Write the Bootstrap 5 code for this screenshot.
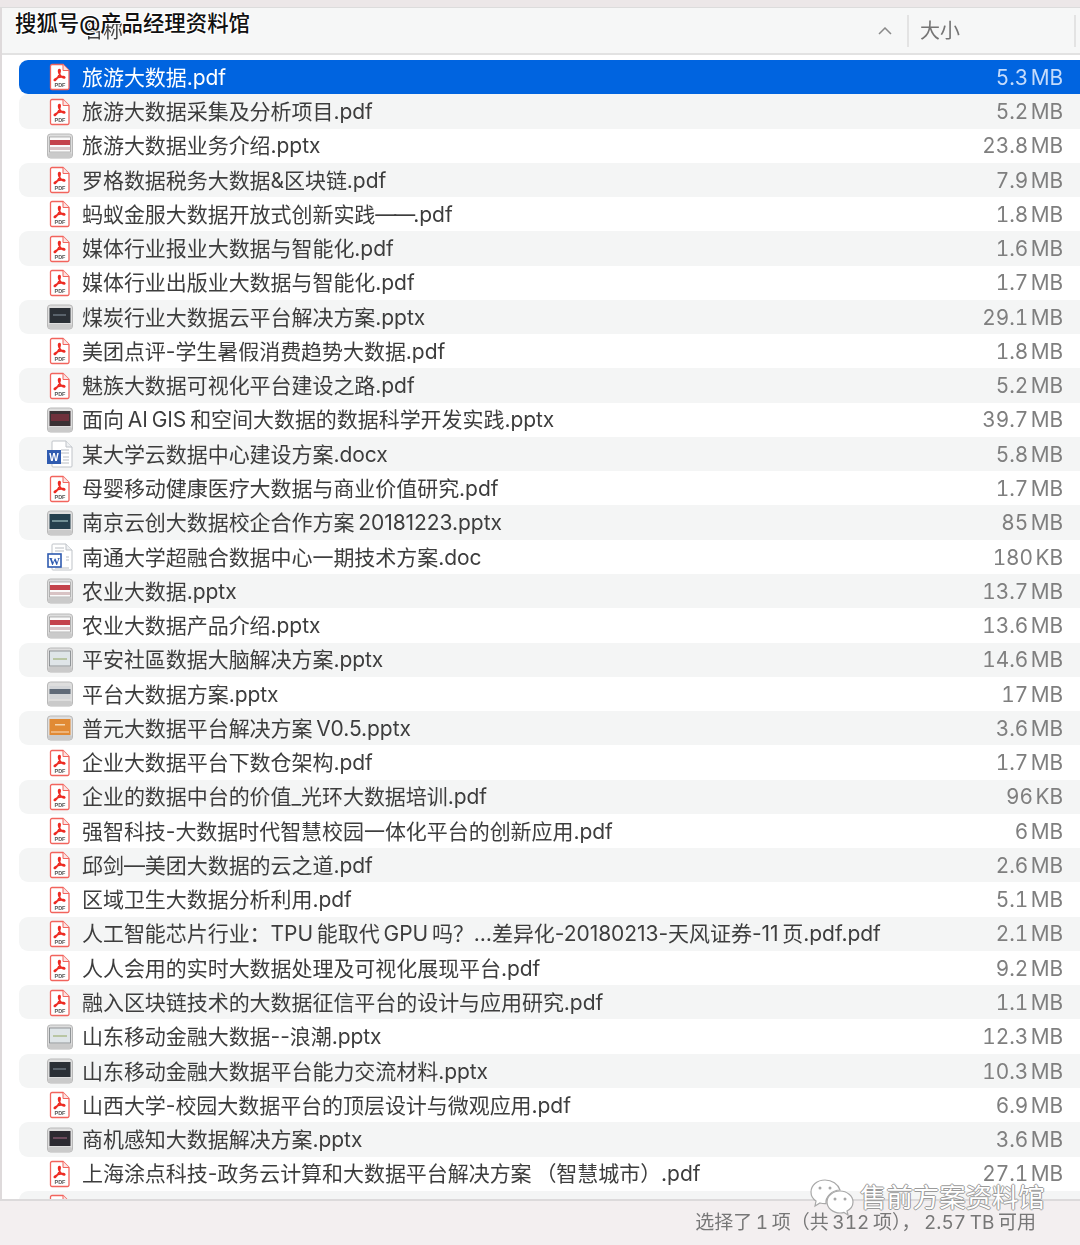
<!DOCTYPE html>
<html lang="zh-CN">
<head>
    <meta charset="UTF-8">
    <title>文件列表</title>
    <link href="https://cdn.jsdelivr.net/npm/bootstrap@5.3.0/dist/css/bootstrap.min.css" rel="stylesheet">
    <style>
        html, body {
            height: 100%;
        }
        body {
            width: 1080px;
            height: 1245px;
            overflow: hidden;
            position: relative;
            background: #fff;
            font-family: "Inter", "Noto Sans CJK SC", sans-serif;
            color: #3d3d3d;
        }
        .top-strip {
            height: 8px;
            background: #ece7e8;
            border-bottom: 1px solid #dcdcdc;
        }
        .finder-body {
            height: 1191px;
            border-left: 2px solid #dedadb;
            background: #fff;
            filter: blur(.35px);
        }
        .col-header {
            height: 47px;
            background: #f6f7f7;
            border-bottom: 2px solid #e2e2e2;
            font-size: 20px;
            color: #444;
        }
        .col-name {
            padding-left: 81px;
        }
        .sort-arrow {
            width: 14px;
            height: 8px;
            margin-right: 15px;
        }
        .col-sep {
            width: 2px;
            height: 32px;
            background: #e3e3e3;
        }
        .col-size {
            width: 165px;
            padding-left: 11px;
            color: #757575;
        }
        .file-list {
            padding: 5px 0 0 17px;
            overflow: hidden;
            height: 1144px;
        }
        .file-row {
            height: 34.28px;
            padding: .4px 17px 0 28px;
            font-size: 21px;
            line-height: 33px;
            letter-spacing: -.05px;
            word-spacing: -2px;
            border-radius: 9px 0 0 9px;
        }
        .file-row:nth-child(even) {
            background: #f4f5f5;
        }
        .file-row.picked {
            background: #0064e0;
            color: #fff;
        }
        .file-icon {
            width: 26px;
            height: 28px;
            flex: none;
            margin-right: 9px;
        }
        .file-size {
            color: #7f7f7f;
            font-size: 20.8px;
            word-spacing: -3px;
            font-variant-numeric: tabular-nums;
        }
        .picked .file-size {
            color: #c4dbfb;
        }
        .dash-tight {
            letter-spacing: -2px;
        }
        .status-bar {
            height: 46px;
            background: #f3eff0;
            border-top: 2px solid #dcdadb;
            color: #777;
            font-size: 19px;
            padding-right: 44px;
            word-spacing: -1.5px;
            font-variant-numeric: tabular-nums;
            filter: blur(.35px);
        }
        .mark-sohu {
            position: absolute;
            left: 15px;
            top: 8px;
            font-size: 21.4px;
            font-weight: 500;
            line-height: 30px;
            color: #111;
            text-shadow: 1px 1px 0 #fff, -1px -1px 0 #fff, 1px -1px 0 #fff, -1px 1px 0 #fff;
        }
        .mark-wechat {
            position: absolute;
            left: 810px;
            top: 1177px;
            font-size: 26.4px;
            line-height: 40px;
            color: #fff;
            text-shadow: 1px 0 0 #9a9a9a, -1px 0 0 #9a9a9a, 0 1px 0 #9a9a9a, 0 -1px 0 #9a9a9a;
        }
        .mark-wechat svg {
            width: 44px;
            height: 38px;
            margin-right: 6px;
        }
    </style>
</head>
<body>

<!-- icon sheet -->
<svg width="0" height="0" class="position-absolute">
    <symbol id="pdf" viewBox="0 0 26 28">
        <path d="M5 1.500h11l6 6V25a1.500 1.500 0 0 1-1.500 1.500H5A1.500 1.500 0 0 1 3.500 25V3A1.500 1.500 0 0 1 5 1.500z" fill="#fff" stroke="#f2645d" stroke-width="1.300"/>
        <path d="M16 1.500V7.500h6" fill="#fbe3e2" stroke="#f2645d" stroke-width="1"/>
        <path d="M12.500 6.500c1 0 .7 2.800-.7 6-1 2.200-2.500 4.200-3.700 4.900-.8.400-1-.4-.4-1 1.600-1.400 5.700-2.900 8.800-2.700 1.600.1 1.600 1.200.4 1.100-2.400-.3-4.800-3.200-5.200-6-.2-1.200 0-2.300.8-2.300z" fill="none" stroke="#ee2a22" stroke-width="1.700"/>
        <text x="13" y="24" font-size="5.500" font-weight="700" text-anchor="middle" fill="#555" font-family="Liberation Sans, sans-serif">PDF</text>
    </symbol>
    <symbol id="ppt-frame" viewBox="0 0 26 28">
        <rect x=".5" y="2" width="25" height="24" rx="3" fill="#dedede" stroke="#b8b8b8"/>
        <rect x="1" y="21" width="24" height="4.500" rx="2" fill="#cacaca"/>
    </symbol>
    <symbol id="ppt-red" viewBox="0 0 26 28">
        <use href="#ppt-frame"/>
        <rect x="2.500" y="5" width="21" height="15" fill="#fafafa" stroke="#8d8d8d" stroke-width=".6"/>
        <rect x="3" y="8" width="20" height="5" fill="#c4434b"/>
        <rect x="3" y="15" width="20" height="3" fill="#d8c3c4"/>
    </symbol>
    <symbol id="ppt-dark" viewBox="0 0 26 28">
        <use href="#ppt-frame"/>
        <rect x="2.500" y="5" width="21" height="15" fill="#2b3036"/>
        <rect x="6" y="11" width="13" height="2" fill="#59626b"/>
    </symbol>
    <symbol id="ppt-plum" viewBox="0 0 26 28">
        <use href="#ppt-frame"/>
        <rect x="2.500" y="5" width="21" height="15" fill="#2c2a31"/>
        <rect x="6" y="11" width="14" height="2" fill="#6b4a5c"/>
    </symbol>
    <symbol id="ppt-maroon" viewBox="0 0 26 28">
        <use href="#ppt-frame"/>
        <rect x="2.500" y="5" width="21" height="15" fill="#3a3134"/>
        <rect x="4" y="8" width="18" height="7" fill="#70313c"/>
    </symbol>
    <symbol id="ppt-teal" viewBox="0 0 26 28">
        <use href="#ppt-frame"/>
        <rect x="2.500" y="5" width="21" height="15" fill="#24404e"/>
        <rect x="5" y="11" width="16" height="2" fill="#6f8f95"/>
    </symbol>
    <symbol id="ppt-light" viewBox="0 0 26 28">
        <use href="#ppt-frame"/>
        <rect x="2.500" y="5" width="21" height="15" fill="#dfe5e8" stroke="#7e8286" stroke-width=".8"/>
        <rect x="6" y="12" width="14" height="2" fill="#b9c6a4"/>
    </symbol>
    <symbol id="ppt-band" viewBox="0 0 26 28">
        <use href="#ppt-frame"/>
        <rect x="2.500" y="6" width="21" height="13" fill="#d3d5d8"/>
        <rect x="2.500" y="9" width="21" height="5" fill="#5f6a78"/>
    </symbol>
    <symbol id="ppt-orange" viewBox="0 0 26 28">
        <use href="#ppt-frame"/>
        <rect x="2.500" y="5" width="21" height="16" fill="#e18a34"/>
        <rect x="8" y="10" width="10" height="1.500" fill="#f5d5ae"/>
        <rect x="4" y="17" width="18" height="2" fill="#eeb47a"/>
    </symbol>
    <symbol id="word" viewBox="0 0 26 28">
        <path d="M6 1h13l6 6v19a1 1 0 0 1-1 1H6a1 1 0 0 1-1-1V2a1 1 0 0 1 1-1z" fill="#fff" stroke="#bfc3c8"/>
        <path d="M19 1v6h6" fill="#eef0f2" stroke="#bfc3c8"/>
        <path d="M14 10h8M14 13h8M16 17h6M16 20h6M9 23h13" stroke="#b9bdc2"/>
        <rect x="0" y="10" width="14" height="14" fill="#2f5bb0"/>
        <text x="7" y="21" font-size="10" font-weight="700" text-anchor="middle" fill="#fff" font-family="Liberation Sans, sans-serif">W</text>
    </symbol>
    <symbol id="word-old" viewBox="0 0 26 28">
        <path d="M6 1h13l6 6v19a1 1 0 0 1-1 1H6a1 1 0 0 1-1-1V2a1 1 0 0 1 1-1z" fill="#fff" stroke="#bfc3c8"/>
        <path d="M19 1v6h6" fill="#eef0f2" stroke="#bfc3c8"/>
        <path d="M8 5h9M8 8h9M19 14h3M19 17h3M8 25h14" stroke="#b9bdc2"/>
        <rect x="1" y="11" width="13" height="13" fill="#fff" stroke="#2f5bb0" stroke-width="1.600"/>
        <text x="7.500" y="21.500" font-size="11" font-weight="700" text-anchor="middle" fill="#2f5bb0" font-family="Liberation Serif, serif">W</text>
    </symbol>
</svg>

<div class="top-strip"></div>

<div class="finder-body">
    <div class="col-header d-flex align-items-center">
        <div class="col-name flex-grow-1">名称</div>
        <svg class="sort-arrow" viewBox="0 0 14 8"><path d="M1 7l6-6 6 6" fill="none" stroke="#8a8a8a" stroke-width="1.500"/></svg>
        <div class="col-sep"></div>
        <div class="col-size">大小</div>
        <div class="col-sep"></div>
        <div style="width:4px"></div>
    </div>

    <div class="file-list">
        <div class="file-row picked d-flex align-items-center"><svg class="file-icon"><use href="#pdf"/></svg><span class="flex-grow-1">旅游大数据.pdf</span><span class="file-size">5.3 MB</span></div>
        <div class="file-row d-flex align-items-center"><svg class="file-icon"><use href="#pdf"/></svg><span class="flex-grow-1">旅游大数据采集及分析项目.pdf</span><span class="file-size">5.2 MB</span></div>
        <div class="file-row d-flex align-items-center"><svg class="file-icon"><use href="#ppt-red"/></svg><span class="flex-grow-1">旅游大数据业务介绍.pptx</span><span class="file-size">23.8 MB</span></div>
        <div class="file-row d-flex align-items-center"><svg class="file-icon"><use href="#pdf"/></svg><span class="flex-grow-1">罗格数据税务大数据&amp;区块链.pdf</span><span class="file-size">7.9 MB</span></div>
        <div class="file-row d-flex align-items-center"><svg class="file-icon"><use href="#pdf"/></svg><span class="flex-grow-1">蚂蚁金服大数据开放式创新实践<span class="dash-tight">——</span>.pdf</span><span class="file-size">1.8 MB</span></div>
        <div class="file-row d-flex align-items-center"><svg class="file-icon"><use href="#pdf"/></svg><span class="flex-grow-1">媒体行业报业大数据与智能化.pdf</span><span class="file-size">1.6 MB</span></div>
        <div class="file-row d-flex align-items-center"><svg class="file-icon"><use href="#pdf"/></svg><span class="flex-grow-1">媒体行业出版业大数据与智能化.pdf</span><span class="file-size">1.7 MB</span></div>
        <div class="file-row d-flex align-items-center"><svg class="file-icon"><use href="#ppt-dark"/></svg><span class="flex-grow-1">煤炭行业大数据云平台解决方案.pptx</span><span class="file-size">29.1 MB</span></div>
        <div class="file-row d-flex align-items-center"><svg class="file-icon"><use href="#pdf"/></svg><span class="flex-grow-1">美团点评-学生暑假消费趋势大数据.pdf</span><span class="file-size">1.8 MB</span></div>
        <div class="file-row d-flex align-items-center"><svg class="file-icon"><use href="#pdf"/></svg><span class="flex-grow-1">魅族大数据可视化平台建设之路.pdf</span><span class="file-size">5.2 MB</span></div>
        <div class="file-row d-flex align-items-center"><svg class="file-icon"><use href="#ppt-maroon"/></svg><span class="flex-grow-1">面向 AI GIS 和空间大数据的数据科学开发实践.pptx</span><span class="file-size">39.7 MB</span></div>
        <div class="file-row d-flex align-items-center"><svg class="file-icon"><use href="#word"/></svg><span class="flex-grow-1">某大学云数据中心建设方案.docx</span><span class="file-size">5.8 MB</span></div>
        <div class="file-row d-flex align-items-center"><svg class="file-icon"><use href="#pdf"/></svg><span class="flex-grow-1">母婴移动健康医疗大数据与商业价值研究.pdf</span><span class="file-size">1.7 MB</span></div>
        <div class="file-row d-flex align-items-center"><svg class="file-icon"><use href="#ppt-teal"/></svg><span class="flex-grow-1">南京云创大数据校企合作方案 20181223.pptx</span><span class="file-size">85 MB</span></div>
        <div class="file-row d-flex align-items-center"><svg class="file-icon"><use href="#word-old"/></svg><span class="flex-grow-1">南通大学超融合数据中心一期技术方案.doc</span><span class="file-size">180 KB</span></div>
        <div class="file-row d-flex align-items-center"><svg class="file-icon"><use href="#ppt-red"/></svg><span class="flex-grow-1">农业大数据.pptx</span><span class="file-size">13.7 MB</span></div>
        <div class="file-row d-flex align-items-center"><svg class="file-icon"><use href="#ppt-red"/></svg><span class="flex-grow-1">农业大数据产品介绍.pptx</span><span class="file-size">13.6 MB</span></div>
        <div class="file-row d-flex align-items-center"><svg class="file-icon"><use href="#ppt-light"/></svg><span class="flex-grow-1">平安社區数据大脑解决方案.pptx</span><span class="file-size">14.6 MB</span></div>
        <div class="file-row d-flex align-items-center"><svg class="file-icon"><use href="#ppt-band"/></svg><span class="flex-grow-1">平台大数据方案.pptx</span><span class="file-size">17 MB</span></div>
        <div class="file-row d-flex align-items-center"><svg class="file-icon"><use href="#ppt-orange"/></svg><span class="flex-grow-1">普元大数据平台解决方案 V0.5.pptx</span><span class="file-size">3.6 MB</span></div>
        <div class="file-row d-flex align-items-center"><svg class="file-icon"><use href="#pdf"/></svg><span class="flex-grow-1">企业大数据平台下数仓架构.pdf</span><span class="file-size">1.7 MB</span></div>
        <div class="file-row d-flex align-items-center"><svg class="file-icon"><use href="#pdf"/></svg><span class="flex-grow-1">企业的数据中台的价值_光环大数据培训.pdf</span><span class="file-size">96 KB</span></div>
        <div class="file-row d-flex align-items-center"><svg class="file-icon"><use href="#pdf"/></svg><span class="flex-grow-1">强智科技-大数据时代智慧校园一体化平台的创新应用.pdf</span><span class="file-size">6 MB</span></div>
        <div class="file-row d-flex align-items-center"><svg class="file-icon"><use href="#pdf"/></svg><span class="flex-grow-1">邱剑—美团大数据的云之道.pdf</span><span class="file-size">2.6 MB</span></div>
        <div class="file-row d-flex align-items-center"><svg class="file-icon"><use href="#pdf"/></svg><span class="flex-grow-1">区域卫生大数据分析利用.pdf</span><span class="file-size">5.1 MB</span></div>
        <div class="file-row d-flex align-items-center"><svg class="file-icon"><use href="#pdf"/></svg><span class="flex-grow-1">人工智能芯片行业：TPU 能取代 GPU 吗？…差异化-20180213-天风证券-11 页.pdf.pdf</span><span class="file-size">2.1 MB</span></div>
        <div class="file-row d-flex align-items-center"><svg class="file-icon"><use href="#pdf"/></svg><span class="flex-grow-1">人人会用的实时大数据处理及可视化展现平台.pdf</span><span class="file-size">9.2 MB</span></div>
        <div class="file-row d-flex align-items-center"><svg class="file-icon"><use href="#pdf"/></svg><span class="flex-grow-1">融入区块链技术的大数据征信平台的设计与应用研究.pdf</span><span class="file-size">1.1 MB</span></div>
        <div class="file-row d-flex align-items-center"><svg class="file-icon"><use href="#ppt-light"/></svg><span class="flex-grow-1">山东移动金融大数据--浪潮.pptx</span><span class="file-size">12.3 MB</span></div>
        <div class="file-row d-flex align-items-center"><svg class="file-icon"><use href="#ppt-dark"/></svg><span class="flex-grow-1">山东移动金融大数据平台能力交流材料.pptx</span><span class="file-size">10.3 MB</span></div>
        <div class="file-row d-flex align-items-center"><svg class="file-icon"><use href="#pdf"/></svg><span class="flex-grow-1">山西大学-校园大数据平台的顶层设计与微观应用.pdf</span><span class="file-size">6.9 MB</span></div>
        <div class="file-row d-flex align-items-center"><svg class="file-icon"><use href="#ppt-plum"/></svg><span class="flex-grow-1">商机感知大数据解决方案.pptx</span><span class="file-size">3.6 MB</span></div>
        <div class="file-row d-flex align-items-center"><svg class="file-icon"><use href="#pdf"/></svg><span class="flex-grow-1">上海涂点科技-政务云计算和大数据平台解决方案 （智慧城市）.pdf</span><span class="file-size">27.1 MB</span></div>
        <div class="file-row d-flex align-items-center"><svg class="file-icon"><use href="#pdf"/></svg></div>
    </div>
</div>

<div class="status-bar d-flex align-items-center justify-content-end">选择了 1 项（共 312 项）， 2.57 TB 可用</div>

<!-- watermarks on top of the shot -->
<div class="mark-sohu">搜狐号@产品经理资料馆</div>
<div class="mark-wechat d-flex align-items-center">
    <svg viewBox="0 0 44 38">
        <path d="M15 2C7 2 1 7.500 1 14c0 4 2 7 5 9l-1 5 5-3c2 .6 4 .8 6 .7C15 19 22 12 30 12 28 6 22 2 15 2z" fill="#fff" stroke="#a8a8a8" stroke-width="1.200"/>
        <path d="M30 13c-7 0-13 5-13 11s6 11 13 11c1.500 0 3-.2 4-.6l4 2.600-1-4c4-2 6-5.500 6-9 0-6-6-11-13-11z" fill="#fff" stroke="#a8a8a8" stroke-width="1.200"/>
        <circle cx="10" cy="10" r="1.500" fill="#a8a8a8"/><circle cx="20" cy="10" r="1.500" fill="#a8a8a8"/>
        <circle cx="25" cy="21" r="1.500" fill="#a8a8a8"/><circle cx="35" cy="21" r="1.500" fill="#a8a8a8"/>
    </svg>
    <span>售前方案资料馆</span>
</div>

<script src="https://cdn.jsdelivr.net/npm/bootstrap@5.3.0/dist/js/bootstrap.bundle.min.js"></script>
</body>
</html>
